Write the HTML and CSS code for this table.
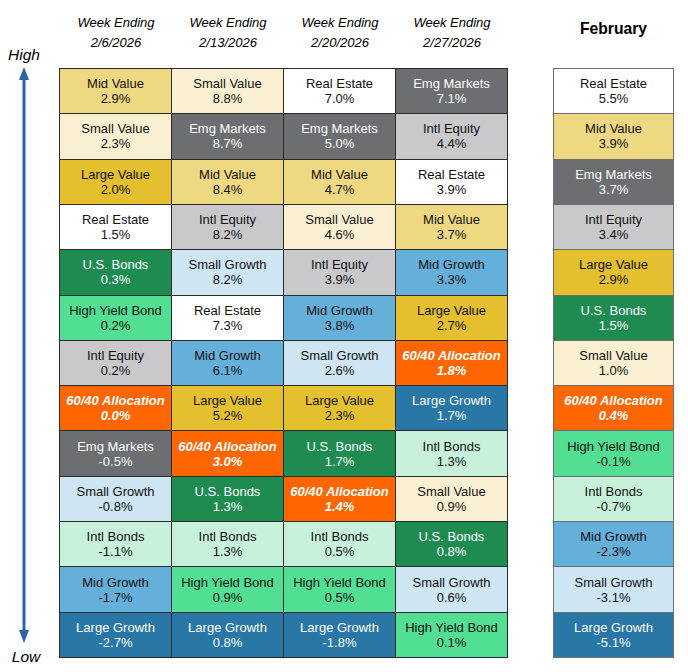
FILE: index.html
```html
<!DOCTYPE html>
<html lang="en">
<head>
<meta charset="utf-8">
<title>Asset Class Returns</title>
<link rel="stylesheet" href="styles.css">
</head>
<body>
<div class="chart">
  <div class="axis">
    <div class="axis-label high">High</div>
    <svg class="arrow" viewBox="0 0 12 576" preserveAspectRatio="none" width="12" height="576">
      <polygon points="6,0 11,13 7.5,13 7.5,563 11,563 6,576 1,563 4.5,563 4.5,13 1,13" fill="#2E62A8"/>
    </svg>
    <div class="axis-label low">Low</div>
  </div>

  <div class="weeks">
    <div class="heads">
      <div class="head">Week Ending<br>2/6/2026</div>
      <div class="head">Week Ending<br>2/13/2026</div>
      <div class="head">Week Ending<br>2/20/2026</div>
      <div class="head">Week Ending<br>2/27/2026</div>
    </div>
    <div class="grid">
      <div class="cell mv">Mid Value<br>2.9%</div>
      <div class="cell sv">Small Value<br>2.3%</div>
      <div class="cell lv">Large Value<br>2.0%</div>
      <div class="cell re">Real Estate<br>1.5%</div>
      <div class="cell ub">U.S. Bonds<br>0.3%</div>
      <div class="cell hy">High Yield Bond<br>0.2%</div>
      <div class="cell ie">Intl Equity<br>0.2%</div>
      <div class="cell al">60/40 Allocation<br>0.0%</div>
      <div class="cell em">Emg Markets<br>-0.5%</div>
      <div class="cell sg">Small Growth<br>-0.8%</div>
      <div class="cell ib">Intl Bonds<br>-1.1%</div>
      <div class="cell mg">Mid Growth<br>-1.7%</div>
      <div class="cell lg">Large Growth<br>-2.7%</div>

      <div class="cell sv">Small Value<br>8.8%</div>
      <div class="cell em">Emg Markets<br>8.7%</div>
      <div class="cell mv">Mid Value<br>8.4%</div>
      <div class="cell ie">Intl Equity<br>8.2%</div>
      <div class="cell sg">Small Growth<br>8.2%</div>
      <div class="cell re">Real Estate<br>7.3%</div>
      <div class="cell mg">Mid Growth<br>6.1%</div>
      <div class="cell lv">Large Value<br>5.2%</div>
      <div class="cell al">60/40 Allocation<br>3.0%</div>
      <div class="cell ub">U.S. Bonds<br>1.3%</div>
      <div class="cell ib">Intl Bonds<br>1.3%</div>
      <div class="cell hy">High Yield Bond<br>0.9%</div>
      <div class="cell lg">Large Growth<br>0.8%</div>

      <div class="cell re">Real Estate<br>7.0%</div>
      <div class="cell em">Emg Markets<br>5.0%</div>
      <div class="cell mv">Mid Value<br>4.7%</div>
      <div class="cell sv">Small Value<br>4.6%</div>
      <div class="cell ie">Intl Equity<br>3.9%</div>
      <div class="cell mg">Mid Growth<br>3.8%</div>
      <div class="cell sg">Small Growth<br>2.6%</div>
      <div class="cell lv">Large Value<br>2.3%</div>
      <div class="cell ub">U.S. Bonds<br>1.7%</div>
      <div class="cell al">60/40 Allocation<br>1.4%</div>
      <div class="cell ib">Intl Bonds<br>0.5%</div>
      <div class="cell hy">High Yield Bond<br>0.5%</div>
      <div class="cell lg">Large Growth<br>-1.8%</div>

      <div class="cell em">Emg Markets<br>7.1%</div>
      <div class="cell ie">Intl Equity<br>4.4%</div>
      <div class="cell re">Real Estate<br>3.9%</div>
      <div class="cell mv">Mid Value<br>3.7%</div>
      <div class="cell mg">Mid Growth<br>3.3%</div>
      <div class="cell lv">Large Value<br>2.7%</div>
      <div class="cell al">60/40 Allocation<br>1.8%</div>
      <div class="cell lg">Large Growth<br>1.7%</div>
      <div class="cell ib">Intl Bonds<br>1.3%</div>
      <div class="cell sv">Small Value<br>0.9%</div>
      <div class="cell ub">U.S. Bonds<br>0.8%</div>
      <div class="cell sg">Small Growth<br>0.6%</div>
      <div class="cell hy">High Yield Bond<br>0.1%</div>
    </div>
  </div>

  <div class="month">
    <div class="month-head">February</div>
    <div class="grid grid-month">
      <div class="cell re">Real Estate<br>5.5%</div>
      <div class="cell mv">Mid Value<br>3.9%</div>
      <div class="cell em">Emg Markets<br>3.7%</div>
      <div class="cell ie">Intl Equity<br>3.4%</div>
      <div class="cell lv">Large Value<br>2.9%</div>
      <div class="cell ub">U.S. Bonds<br>1.5%</div>
      <div class="cell sv">Small Value<br>1.0%</div>
      <div class="cell al">60/40 Allocation<br>0.4%</div>
      <div class="cell hy">High Yield Bond<br>-0.1%</div>
      <div class="cell ib">Intl Bonds<br>-0.7%</div>
      <div class="cell mg">Mid Growth<br>-2.3%</div>
      <div class="cell sg">Small Growth<br>-3.1%</div>
      <div class="cell lg">Large Growth<br>-5.1%</div>
    </div>
  </div>
</div>
</body>
</html>
```

FILE: styles.css
```css
html, body {
  margin: 0;
  padding: 0;
  background: #ffffff;
}

body {
  font-family: "Liberation Sans", Arial, sans-serif;
  color: #000;
}

.chart {
  display: flex;
  width: 688px;
  height: 672px;
  overflow: hidden;
}

.axis {
  width: 59px;
  display: flex;
  flex-direction: column;
  align-items: flex-start;
}

.axis-label {
  font-style: italic;
  font-size: 15.5px;
  line-height: 18px;
  width: 48px;
  text-align: center;
}

.high {
  margin-top: 46px;
}

.low {
  margin-top: 5px;
  padding-left: 2px;
}

.arrow {
  display: block;
  margin-left: 18px;
  margin-top: 3px;
}

.weeks {
  width: 449px;
}

.heads {
  display: grid;
  grid-template-columns: repeat(4, 112px);
  height: 68px;
  padding-left: 1px;
}

.head {
  font-style: italic;
  font-size: 13px;
  line-height: 20px;
  padding-top: 13px;
  text-align: center;
}

.grid {
  display: grid;
  grid-template-columns: repeat(4, 111px);
  grid-template-rows: repeat(13, 1fr);
  grid-auto-flow: column;
  gap: 1px;
  padding: 1px;
  background: #2b2b2b;
  height: 588px;
}

.month {
  width: 121px;
  margin-left: 45px;
}

.month-head {
  height: 68px;
  box-sizing: border-box;
  padding-top: 19px;
  font-weight: bold;
  font-size: 15.7px;
  line-height: 20px;
  text-align: center;
}

.grid-month {
  grid-template-columns: 119px;
  background: #6e6e6e;
}

.cell {
  display: flex;
  align-items: center;
  justify-content: center;
  text-align: center;
  font-size: 13px;
  line-height: 15px;
  color: #111;
}

.mv { background: #EED882; }
.sv { background: #FAF0D1; }
.lv { background: #E4BF2E; }
.re { background: #FFFFFF; }
.ub { background: #1E8B50; color: #fff; }
.hy { background: #52DE93; }
.ie { background: #C9C9CB; }
.al { background: #FF6600; color: #fff; font-weight: bold; font-style: italic; }
.em { background: #6D6E71; color: #fff; }
.sg { background: #CEE5F3; }
.ib { background: #C7F1DA; }
.mg { background: #65AFDB; }
.lg { background: #2877A7; color: #fff; }
```
